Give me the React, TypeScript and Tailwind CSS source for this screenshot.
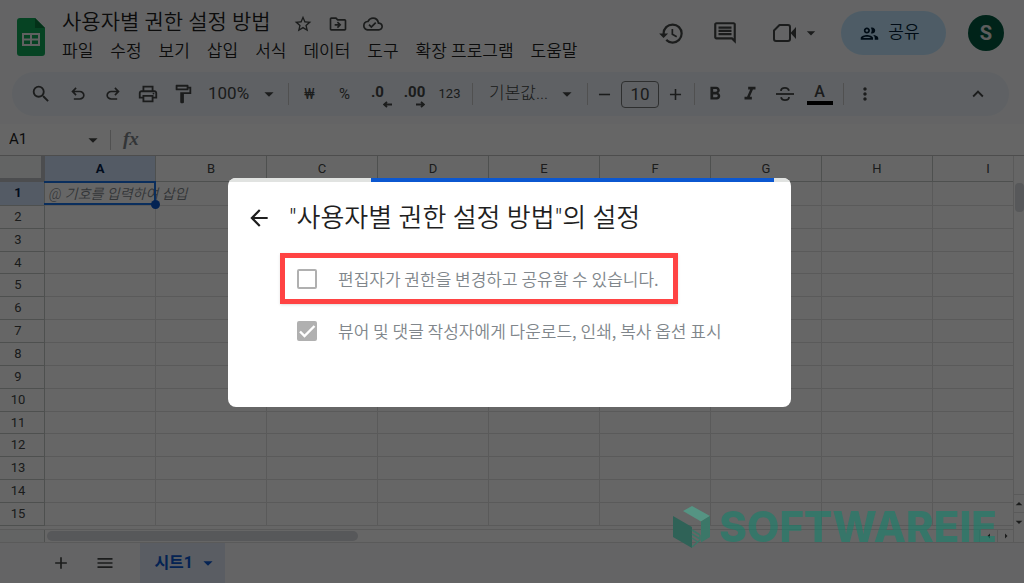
import React, { useState } from 'react';
import {
  MdAdd,
  MdArrowBack,
  MdArrowDropDown,
  MdArrowDropUp,
  MdArrowLeft,
  MdArrowRight,
  MdFormatBold,
  MdFormatItalic,
  MdHistory,
  MdKeyboardArrowUp,
  MdMenu,
  MdMoreVert,
  MdOutlineCloudDone,
  MdOutlineComment,
  MdOutlineDriveFileMove,
  MdOutlineFormatPaint,
  MdOutlinePeople,
  MdOutlinePrint,
  MdRemove,
  MdSearch,
  MdStarBorder,
} from 'react-icons/md';

const MENUS = ['파일', '수정', '보기', '삽입', '서식', '데이터', '도구', '확장 프로그램', '도움말'];
const COLUMNS = ['A', 'B', 'C', 'D', 'E', 'F', 'G', 'H', 'I'];
const ROWS = Array.from({ length: 15 }, (_, i) => i + 1);

const SheetsLogo = () => (
  <svg width="28" height="38" viewBox="0 0 28 38" aria-hidden="true">
    <path d="M3 0h15l10 10v25a3 3 0 0 1-3 3H3a3 3 0 0 1-3-3V3a3 3 0 0 1 3-3z" fill="#0fa958" />
    <path d="M18 0l10 10H18z" fill="#087a3c" />
    <path d="M5 15h18v13H5zM7 17v3.5h6V17zM15 17v3.5h6V17zM7 22.5V26h6v-3.5zM15 22.5V26h6v-3.5z" fill="#f1f1f1" fillRule="evenodd" />
  </svg>
);

const UndoIcon = ({ flip = false }: { flip?: boolean }) => (
  <svg width="20" height="20" viewBox="0 0 24 24" fill="currentColor" className={flip ? '-scale-x-100' : ''}>
    <path d="M7 19v-2h7.1q1.575 0 2.738-1T18 13.5 16.838 11 14.1 10H7.8l2.6 2.6L9 14 4 9l5-5 1.4 1.4L7.8 8h6.3q2.425 0 4.163 1.575T20 13.5t-1.737 3.925T14.1 19z" />
  </svg>
);

const VideoIcon = () => (
  <svg width="26" height="26" viewBox="0 0 26 26" fill="none" stroke="currentColor" strokeWidth="2">
    <path d="M8.5 5H17a2 2 0 0 1 2 2v12a2 2 0 0 1-2 2H5a2 2 0 0 1-2-2v-8.500z" strokeLinejoin="round" />
    <path d="M19.500 13l5.500-6v12z" fill="currentColor" stroke="none" />
  </svg>
);

const StrikeIcon = () => (
  <svg width="20" height="20" viewBox="0 0 20 20" fill="none" stroke="currentColor" strokeWidth="1.8">
    <path d="M1 10h18" />
    <path d="M14 6.800C13.500 4.800 12 3.900 10 3.900c-2.300 0-4 1.200-4 3.100M6 13.200c.5 2 2 2.900 4 2.900 2.300 0 4-1.200 4-3.100" />
  </svg>
);

const DecimalIcon = ({ label, more }: { label: string; more: boolean }) => (
  <span className={`relative pb-1 text-[15px] font-bold leading-4 ${more ? '' : 'pr-1'}`}>
    {label}
    <svg width="9" height="7" viewBox="0 0 9 7" fill="none" stroke="currentColor" strokeWidth="1.8" className={`absolute -bottom-1 ${more ? 'right-0' : '-right-1'}`}>
      <path d={more ? 'M0 3.5h8M5 .8l3 2.7-3 2.7' : 'M9 3.5H1M4 .8L1 3.5l3 2.7'} />
    </svg>
  </span>
);

interface ToolProps {
  label: string;
  narrow?: boolean;
  children: React.ReactNode;
}

const Tool: React.FC<ToolProps> = ({ label, narrow, children }) => (
  <button aria-label={label} className={`flex h-8 shrink-0 items-center justify-center ${narrow ? 'w-[33px]' : 'w-[35px]'}`}>
    {children}
  </button>
);

const Divider = () => <span className="h-[22px] w-px shrink-0 bg-[#c7c7c7]" />;

const Header = () => (
  <header className="flex h-[72px] shrink-0 items-start pl-[17px] pr-5">
    <div className="mt-[18px]">
      <SheetsLogo />
    </div>
    <div className="ml-[17px] pt-2">
      <div className="flex h-7 items-center text-[#444746]">
        <h1 className="mr-[22px] whitespace-nowrap text-[21px] font-[350] leading-7 text-[#1f1f1f]">사용자별 권한 설정 방법</h1>
        <div className="mt-1 flex gap-[15px]">
          <button aria-label="별표"><MdStarBorder size={20} /></button>
          <button aria-label="이동"><MdOutlineDriveFileMove size={20} /></button>
          <button aria-label="문서 상태"><MdOutlineCloudDone size={20} /></button>
        </div>
      </div>
      <nav className="mt-[3px] flex gap-[17px] whitespace-nowrap text-[17px] font-[350] leading-6 text-[#1f1f1f]">
        {MENUS.map(menu => (
          <button key={menu}>{menu}</button>
        ))}
      </nav>
    </div>
    <div className="ml-auto mt-[11px] flex h-11 items-center text-[#444746]">
      <button aria-label="기록" className="mr-[27px]"><MdHistory size={27} /></button>
      <button aria-label="댓글" className="mr-[33px]"><MdOutlineComment size={26} /></button>
      <button aria-label="통화" className="mr-5 flex items-center">
        <VideoIcon />
        <MdArrowDropDown size={20} className="ml-1" />
      </button>
      <button className="flex h-11 w-[105px] items-center justify-center gap-2 rounded-full bg-[#c2e7ff] pr-2 text-[17px] font-[350] text-[#001d35]">
        <MdOutlinePeople size={21} />
        공유
      </button>
      <button className="ml-[22px] h-9 w-9 rounded-full bg-[#00593f] text-[20px] font-bold text-[#e8e8e8]">S</button>
    </div>
  </header>
);

const Toolbar = () => (
  <div className="ml-3 mr-[15px] flex h-11 shrink-0 items-center rounded-full bg-[#edf2fa] pl-[11px] pr-[14px] text-[#444746]">
    <Tool label="검색"><MdSearch size={22} /></Tool>
    <span className="w-[2px]" />
    <Tool label="실행취소"><UndoIcon /></Tool>
    <Tool label="재실행"><UndoIcon flip /></Tool>
    <Tool label="인쇄"><MdOutlinePrint size={22} /></Tool>
    <Tool label="서식 복사"><MdOutlineFormatPaint size={22} /></Tool>
    <div className="flex w-[88px] items-center pl-2">
      <select aria-label="확대/축소" className="w-[50px] appearance-none text-[17px]">
        <option>100%</option>
      </select>
      <MdArrowDropDown size={22} />
    </div>
    <Divider />
    <span className="w-[3px]" />
    <Tool label="통화 형식"><span className="text-sm">₩</span></Tool>
    <Tool label="퍼센트 형식"><span className="text-[15px]">%</span></Tool>
    <Tool label="소수점 이하 자릿수 감소"><DecimalIcon label=".0" more={false} /></Tool>
    <Tool label="소수점 이하 자릿수 증가"><DecimalIcon label=".00" more /></Tool>
    <Tool label="서식 더보기"><span className="text-[13px]">123</span></Tool>
    <span className="w-[5px]" />
    <Divider />
    <div className="flex w-[114px] items-center pl-4">
      <select aria-label="글꼴" className="w-[67px] appearance-none text-[17px] font-light">
        <option>기본값...</option>
      </select>
      <MdArrowDropDown size={22} />
    </div>
    <Divider />
    <Tool label="글꼴 크기 줄이기" narrow><MdRemove size={19} /></Tool>
    <input aria-label="글꼴 크기" defaultValue="10" className="h-[27px] w-[38px] rounded border border-[#747775] text-center text-[17px]" />
    <Tool label="글꼴 크기 늘리기" narrow><MdAdd size={19} /></Tool>
    <span className="w-[2px]" />
    <Divider />
    <span className="w-[2px]" />
    <Tool label="굵게"><MdFormatBold size={22} /></Tool>
    <Tool label="기울임꼴"><MdFormatItalic size={22} /></Tool>
    <Tool label="취소선"><StrikeIcon /></Tool>
    <Tool label="텍스트 색상">
      <span className="flex flex-col items-center text-base font-medium leading-[18px]">
        A
        <span className="h-1 w-[26px] bg-black" />
      </span>
    </Tool>
    <span className="w-[6px]" />
    <Divider />
    <span className="w-[3px]" />
    <Tool label="더보기"><MdMoreVert size={20} /></Tool>
    <span className="flex-1" />
    <Tool label="메뉴 숨기기"><MdKeyboardArrowUp size={22} /></Tool>
  </div>
);

const FormulaBar = () => (
  <div className="mt-2 flex h-8 shrink-0 items-center border-b border-[#c0c0c0] bg-white text-[#444746]">
    <input aria-label="이름 상자" defaultValue="A1" className="w-[74px] pl-[9px] text-[15px] text-[#1f1f1f]" />
    <MdArrowDropDown size={22} className="ml-2 mr-[6px]" />
    <span className="h-5 w-px bg-[#c7c7c7]" />
    <label htmlFor="formula" className="ml-3 font-['Liberation_Serif'] text-[19px] font-bold italic text-[#80868b]">fx</label>
    <input id="formula" className="min-w-0 flex-1" />
  </div>
);

const Grid = () => (
  <div className="flex min-h-0 flex-1 bg-white">
    <div className="flex min-w-0 flex-1 flex-col">
      <div className="min-h-0 flex-1 overflow-hidden">
        <table className="h-[370px] w-[1044px] table-fixed border-separate border-spacing-0 text-[13px] leading-4 text-[#444746]">
          <thead>
            <tr className="h-[26px]">
              <th className="w-[45px] border-b-4 border-r-4 border-[#bdc1c6] bg-[#f8f9fa]" />
              {COLUMNS.map(col => (
                <th
                  key={col}
                  scope="col"
                  className={`w-[111px] border-b border-r border-[#c4c7c5] ${col === 'A' ? 'bg-[#d3e3fd] font-bold text-[#041e49]' : 'font-normal'}`}
                >
                  {col}
                </th>
              ))}
            </tr>
          </thead>
          <tbody>
            {ROWS.map(row => (
              <tr key={row} className="h-[22px]">
                <th
                  scope="row"
                  className={`border-b border-r border-[#c4c7c5] p-0 pr-2 ${row === 1 ? 'bg-[#d3e3fd] font-bold text-[#041e49]' : 'font-normal'}`}
                >
                  {row}
                </th>
                {COLUMNS.map(col => (
                  <td key={col} className="border-b border-r border-[#e1e1e1] p-0">
                    {row === 1 && col === 'A' && (
                      <div className="relative h-[22px]">
                        <span className="block whitespace-nowrap pl-1 text-sm font-[350] italic leading-6 text-[#80868b]">@ 기호를 입력하여 삽입</span>
                        <span className="absolute -bottom-px -left-px -right-px -top-px border-2 border-l-0 border-[#1a73e8]" />
                        <span className="absolute -bottom-[5px] -right-[5px] h-[9px] w-[9px] rounded-full bg-[#0b57d0]" />
                      </div>
                    )}
                  </td>
                ))}
              </tr>
            ))}
          </tbody>
        </table>
      </div>
      <div className="flex h-[13px] shrink-0 items-center border-t border-[#e1e1e1] text-[#444746]">
        <span className="h-full w-[45px] border-r border-[#c4c7c5] bg-[#f8f9fa]" />
        <span className="ml-0.5 h-[10px] w-[311px] rounded-full bg-[#dadce0]" />
        <button aria-label="왼쪽" className="ml-auto flex w-[18px] justify-center border-l border-[#e1e1e1]"><MdArrowLeft size={18} className="h-3 shrink-0" /></button>
        <button aria-label="오른쪽" className="flex w-4 justify-center border-l border-[#e1e1e1]"><MdArrowRight size={18} className="h-3 shrink-0" /></button>
      </div>
    </div>
    <div className="flex w-[11px] shrink-0 flex-col items-end overflow-hidden border-l border-[#e1e1e1] text-[#444746]">
      <span className="mt-[27px] h-[29px] w-[9px] rounded-[4px] bg-[#dadce0]" />
      <button aria-label="위로" className="mt-auto flex h-[18px] w-full items-center justify-center border-t border-[#e1e1e1]"><MdArrowDropUp size={16} className="shrink-0" /></button>
      <button aria-label="아래로" className="mb-[12px] flex h-[18px] w-full items-center justify-center border-t border-[#e1e1e1]"><MdArrowDropDown size={16} className="shrink-0" /></button>
    </div>
  </div>
);

const SheetTabs = () => (
  <footer className="flex h-[41px] shrink-0 items-center border-t border-[#e1e1e1] pl-[51px] text-[#444746]">
    <button aria-label="시트 추가"><MdAdd size={20} /></button>
    <button aria-label="모든 시트" className="ml-6"><MdMenu size={20} /></button>
    <button className="ml-[25px] flex h-full w-[85px] items-center justify-end gap-1 bg-[#e1e9f7] pr-[6px] text-base font-bold text-[#0b57d0]">
      시트1
      <MdArrowDropDown size={22} />
    </button>
  </footer>
);

interface OptionProps {
  label: string;
  checked: boolean;
  onChange: () => void;
}

const Option: React.FC<OptionProps> = ({ label, checked, onChange }) => (
  <label className="flex items-center whitespace-nowrap font-['Noto_Sans_CJK_KR',sans-serif] text-[17px] font-[350] leading-6 text-[#80868b]">
    <span className="relative mr-[21px] flex h-5 w-5">
      <input
        type="checkbox"
        checked={checked}
        onChange={onChange}
        className="h-5 w-5 appearance-none rounded-[2px] border-2 border-[#b0b0b0] checked:bg-[#b0b0b0]"
      />
      {checked && (
        <svg viewBox="0 0 20 20" className="pointer-events-none absolute inset-0" fill="none" stroke="#fff" strokeWidth="2.4">
          <path d="M3 10.5l4.500 4.500L17.500 5" />
        </svg>
      )}
    </span>
    {label}
  </label>
);

const SettingsDialog = () => {
  const [canShare, setCanShare] = useState(false);
  const [canDownload, setCanDownload] = useState(true);

  return (
    <div className="fixed inset-0 flex items-center justify-center bg-black/60 pr-[5px] pt-0.5">
      <div role="dialog" aria-labelledby="dialog-title" className="h-[229px] w-[563px] overflow-hidden rounded-lg bg-white">
        <div className="flex h-1 bg-[#e1e3e1] pl-[143px]">
          <span className="w-[403px] bg-[#0b57d0]" />
        </div>
        <div className="flex items-center pl-[18px] pt-[18px] text-[#1f1f1f]">
          <button aria-label="뒤로"><MdArrowBack size={26} /></button>
          <h2 id="dialog-title" className="ml-[17px] text-[26px] font-[350] leading-9">"사용자별 권한 설정 방법"의 설정</h2>
        </div>
        <div className="ml-[52px] mt-[17px] flex h-[51px] w-[398px] items-center border-[5px] border-[#ff4343] pl-3 shadow-sm">
          <Option label="편집자가 권한을 변경하고 공유할 수 있습니다." checked={canShare} onChange={() => setCanShare(!canShare)} />
        </div>
        <div className="ml-[69px] mt-[15px]">
          <Option label="뷰어 및 댓글 작성자에게 다운로드, 인쇄, 복사 옵션 표시" checked={canDownload} onChange={() => setCanDownload(!canDownload)} />
        </div>
      </div>
    </div>
  );
};

const Watermark = () => (
  <div className="pointer-events-none fixed bottom-[35px] right-[27px] flex items-center gap-2 text-[#16806a]/60">
    <svg width="38" height="42" viewBox="0 0 38 42">
      <path d="M0 10l19 11v21L0 31z" fill="#2f6257" />
      <path d="M10 5l9-5 18 10-9 5.500z" fill="#559483" />
      <path d="M28 15.500l9-5.500v21l-9 5.500z" fill="#3b7768" />
      <path d="M19 24l8 5M19 28l8 5M19 32l6 4M27 29v5l-8 7" fill="none" stroke="#3b7768" strokeWidth="1.500" />
    </svg>
    <span className="font-['Inter'] text-[42px] font-extrabold leading-[42px]">SOFTWAREIE</span>
  </div>
);

const App: React.FC = () => {
  return (
    <div className="flex h-screen flex-col overflow-hidden bg-[#f9fbfd] font-['Roboto','Noto_Sans_CJK_KR',sans-serif]">
      <Header />
      <Toolbar />
      <FormulaBar />
      <Grid />
      <SheetTabs />
      <SettingsDialog />
      <Watermark />
    </div>
  );
};

export default App;
